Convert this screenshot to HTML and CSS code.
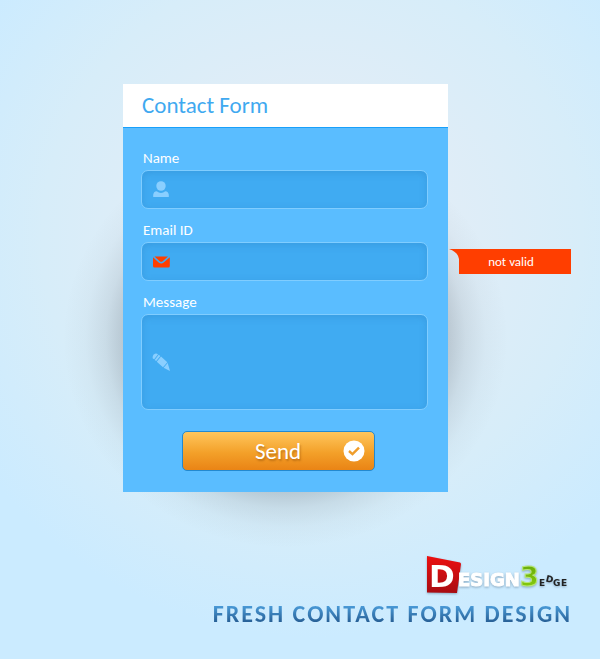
FILE: index.html
```html
<!DOCTYPE html>
<html lang="en">
<head>
<meta charset="utf-8">
<meta name="viewport" content="width=device-width, initial-scale=1">
<title>Contact Form</title>
<link rel="stylesheet" href="styles.css">
</head>
<body>
<main class="stage">
  <form class="card" novalidate>
    <h1 class="card-title">Contact Form</h1>
    <div class="card-body">
      <div class="field">
        <label for="name">Name</label>
        <div class="control">
          <input id="name" type="text">
          <svg class="icon" viewBox="0 0 18 18" aria-hidden="true"><ellipse cx="9" cy="5" rx="4.700" ry="4.800"/><path d="M1.200 16v-2.200Q1.500 10.500 4.700 10.200Q9 13.800 13.300 10.200Q16.500 10.500 16.800 13.800V16Z"/></svg>
        </div>
      </div>
      <div class="field">
        <label for="email">Email ID</label>
        <div class="control">
          <input id="email" type="email" aria-invalid="true" aria-describedby="email-error">
          <svg class="icon icon-error" viewBox="0 0 18 18" aria-hidden="true"><path d="M2.500 3.500h13.500L10.700 8.300Q9.200 9.300 7.700 8.300Z"/><path d="M1 4.300 6.700 9.500Q9.200 11.300 11.700 9.500L17.800 4.300V13Q17.800 14.500 16.300 14.500H2.500Q1 14.500 1 13Z"/></svg>
          <span class="error" id="email-error">
            <svg class="error-tail" viewBox="0 0 10 25" aria-hidden="true"><path d="M0 0H10V25V10Q9 3 0 0Z"/></svg>
            <span class="error-text">not valid</span>
          </span>
        </div>
      </div>
      <div class="field">
        <label for="message">Message</label>
        <div class="control">
          <textarea id="message"></textarea>
          <svg class="icon" viewBox="0 0 18 18" aria-hidden="true"><path d="M.8 5.500Q.2 3 1.800 1.500Q3.800-.2 6 1.200L2.200 6.300Z"/><path d="M6.700 1.800 8.300 3.100 4.200 8.100 2.700 6.900Z"/><path d="M9 3.600 15.300 9.300 11 14.200 4.800 8.700Z"/><path d="M15.700 10 18 18 11.600 14.800Z"/></svg>
        </div>
      </div>
      <button class="send" type="submit">
        <span>Send</span>
        <svg class="send-icon" viewBox="0 0 22 22" aria-hidden="true"><circle cx="11" cy="11" r="10.500" fill="#fff"/><path d="M6 11 9.500 14.200 16 7.600" fill="none" stroke="#ef9d2b" stroke-width="2.400"/></svg>
      </button>
    </div>
  </form>
  <footer class="footer">
    <svg class="logo" viewBox="0 0 146 42" role="img" aria-label="Design 3 Edge">
      <defs>
        <linearGradient id="red" x2="0" y2="1"><stop stop-color="#ec1010"/><stop offset="1" stop-color="#a80c12"/></linearGradient>
        <linearGradient id="green" x2="0" y2="1"><stop stop-color="#63a80c"/><stop offset="1" stop-color="#8cd00c"/></linearGradient>
      </defs>
      <path d="M1 1 34 7.500Q35 8 35 9L31 38 1 37.500Z" fill="url(#red)"/>
      <text class="logo-d" x="3" y="32">D</text>
      <text class="logo-word" x="32" y="31">ESIGN</text>
      <text class="logo-three" x="94" y="31">3</text>
      <text class="logo-edge" x="113" y="31">E</text>
      <text class="logo-edge" x="120" y="27" transform="rotate(14 123 24)">D</text>
      <text class="logo-edge" x="127" y="31">G</text>
      <text class="logo-edge" x="135" y="31">E</text>
    </svg>
    <p class="tagline">FRESH CONTACT FORM DESIGN</p>
  </footer>
</main>
</body>
</html>
```
FILE: styles.css
```css
* { box-sizing: border-box; }

body {
  margin: 0;
  min-height: 100vh;
  font-family: Carlito, Lato, "Open Sans", sans-serif;
  background: radial-gradient(circle at 52% 36%, #e3edf5 0, #e0edf7 140px, #d7edf9 270px, #cbebff 400px);
}

.stage {
  padding: 84px 28px 28px 123px;
}

.card {
  position: relative;
  margin-right: 124px;
  background: #5abdff;
}

.card::before {
  content: "";
  position: absolute;
  z-index: -1;
  inset: 46px -60px -56px;
  background: radial-gradient(closest-side, rgba(60, 70, 80, .36) 60%, rgba(60, 70, 80, .23) 72%, rgba(60, 70, 80, .1) 81%, rgba(60, 70, 80, .03) 90%, rgba(60, 70, 80, 0));
}

.card-title {
  margin: 0;
  padding: 0 19px;
  height: 44px;
  line-height: 42px;
  font-size: 23px;
  font-weight: 400;
  color: #3fa9f0;
  background: #fff;
  border-bottom: 1px solid #18a0fb;
}

.card-body {
  display: flex;
  flex-direction: column;
  gap: 12px;
  padding: 21px 20px 21px 18px;
}

.field {
  display: flex;
  flex-direction: column;
  gap: 3px;
}

.field label {
  padding-left: 2px;
  font-size: 15px;
  line-height: 18px;
  color: #fff;
}

.control {
  position: relative;
  display: flex;
  align-items: center;
}

.control input,
.control textarea {
  display: block;
  width: 100%;
  height: 39px;
  padding: 8px 12px 8px 40px;
  font: inherit;
  font-size: 15px;
  color: #fff;
  border: 1px solid #80cdff;
  border-radius: 7px;
  outline: 0;
  resize: none;
  background: #40abf2;
  box-shadow: inset 0 2px 7px rgba(30, 110, 175, .25);
}

.control textarea {
  height: 96px;
}

.icon {
  position: absolute;
  left: 11px;
  width: 18px;
  height: 18px;
  fill: #8acfff;
  pointer-events: none;
}

.icon-error {
  fill: #ff3e00;
}

.error {
  position: absolute;
  left: calc(100% + 21px);
  top: 7px;
  display: flex;
  height: 25px;
  line-height: 25px;
  font-size: 13px;
  color: #fff;
}

.error-tail {
  width: 10px;
  height: 25px;
  fill: #ff3e00;
}

.error-text {
  width: 112px;
  padding-right: 8px;
  text-align: center;
  white-space: nowrap;
  background: #ff3e00;
}

.send {
  position: relative;
  align-self: center;
  width: 193px;
  height: 40px;
  margin: 9px 13px 0 0;
  padding: 0;
  font: inherit;
  font-size: 23px;
  color: #fff;
  text-shadow: 1px 2px 2px rgba(120, 60, 0, .4);
  border: 1px solid #2389cf;
  border-radius: 5px;
  background: linear-gradient(#ffc65c, #f3a029 55%, #ea8415);
}

.send-icon {
  position: absolute;
  right: 9px;
  top: 8px;
  width: 22px;
  height: 22px;
}

.footer {
  display: flex;
  flex-direction: column;
  align-items: flex-end;
  padding-top: 63px;
}

.logo {
  width: 146px;
  height: 42px;
  font-family: "DejaVu Sans", sans-serif;
  font-weight: 700;
  filter: drop-shadow(0 1px 1px rgba(60, 90, 120, .45));
}

.logo-d { font-size: 31px; fill: #fff; }
.logo-word { font-size: 18px; fill: #fff; stroke: #fff; stroke-width: 1px; }
.logo-three { font-size: 27px; fill: url(#green); stroke: #b9e878; stroke-width: 1px; }
.logo-edge { font-size: 9px; fill: #222; }

.tagline {
  margin: 3px 0 0;
  font-size: 24px;
  line-height: 28px;
  font-weight: 700;
  letter-spacing: 2px;
  white-space: nowrap;
  color: transparent;
  background: linear-gradient(#4a9bd8 20%, #275f95 80%);
  background-clip: text;
}
```
